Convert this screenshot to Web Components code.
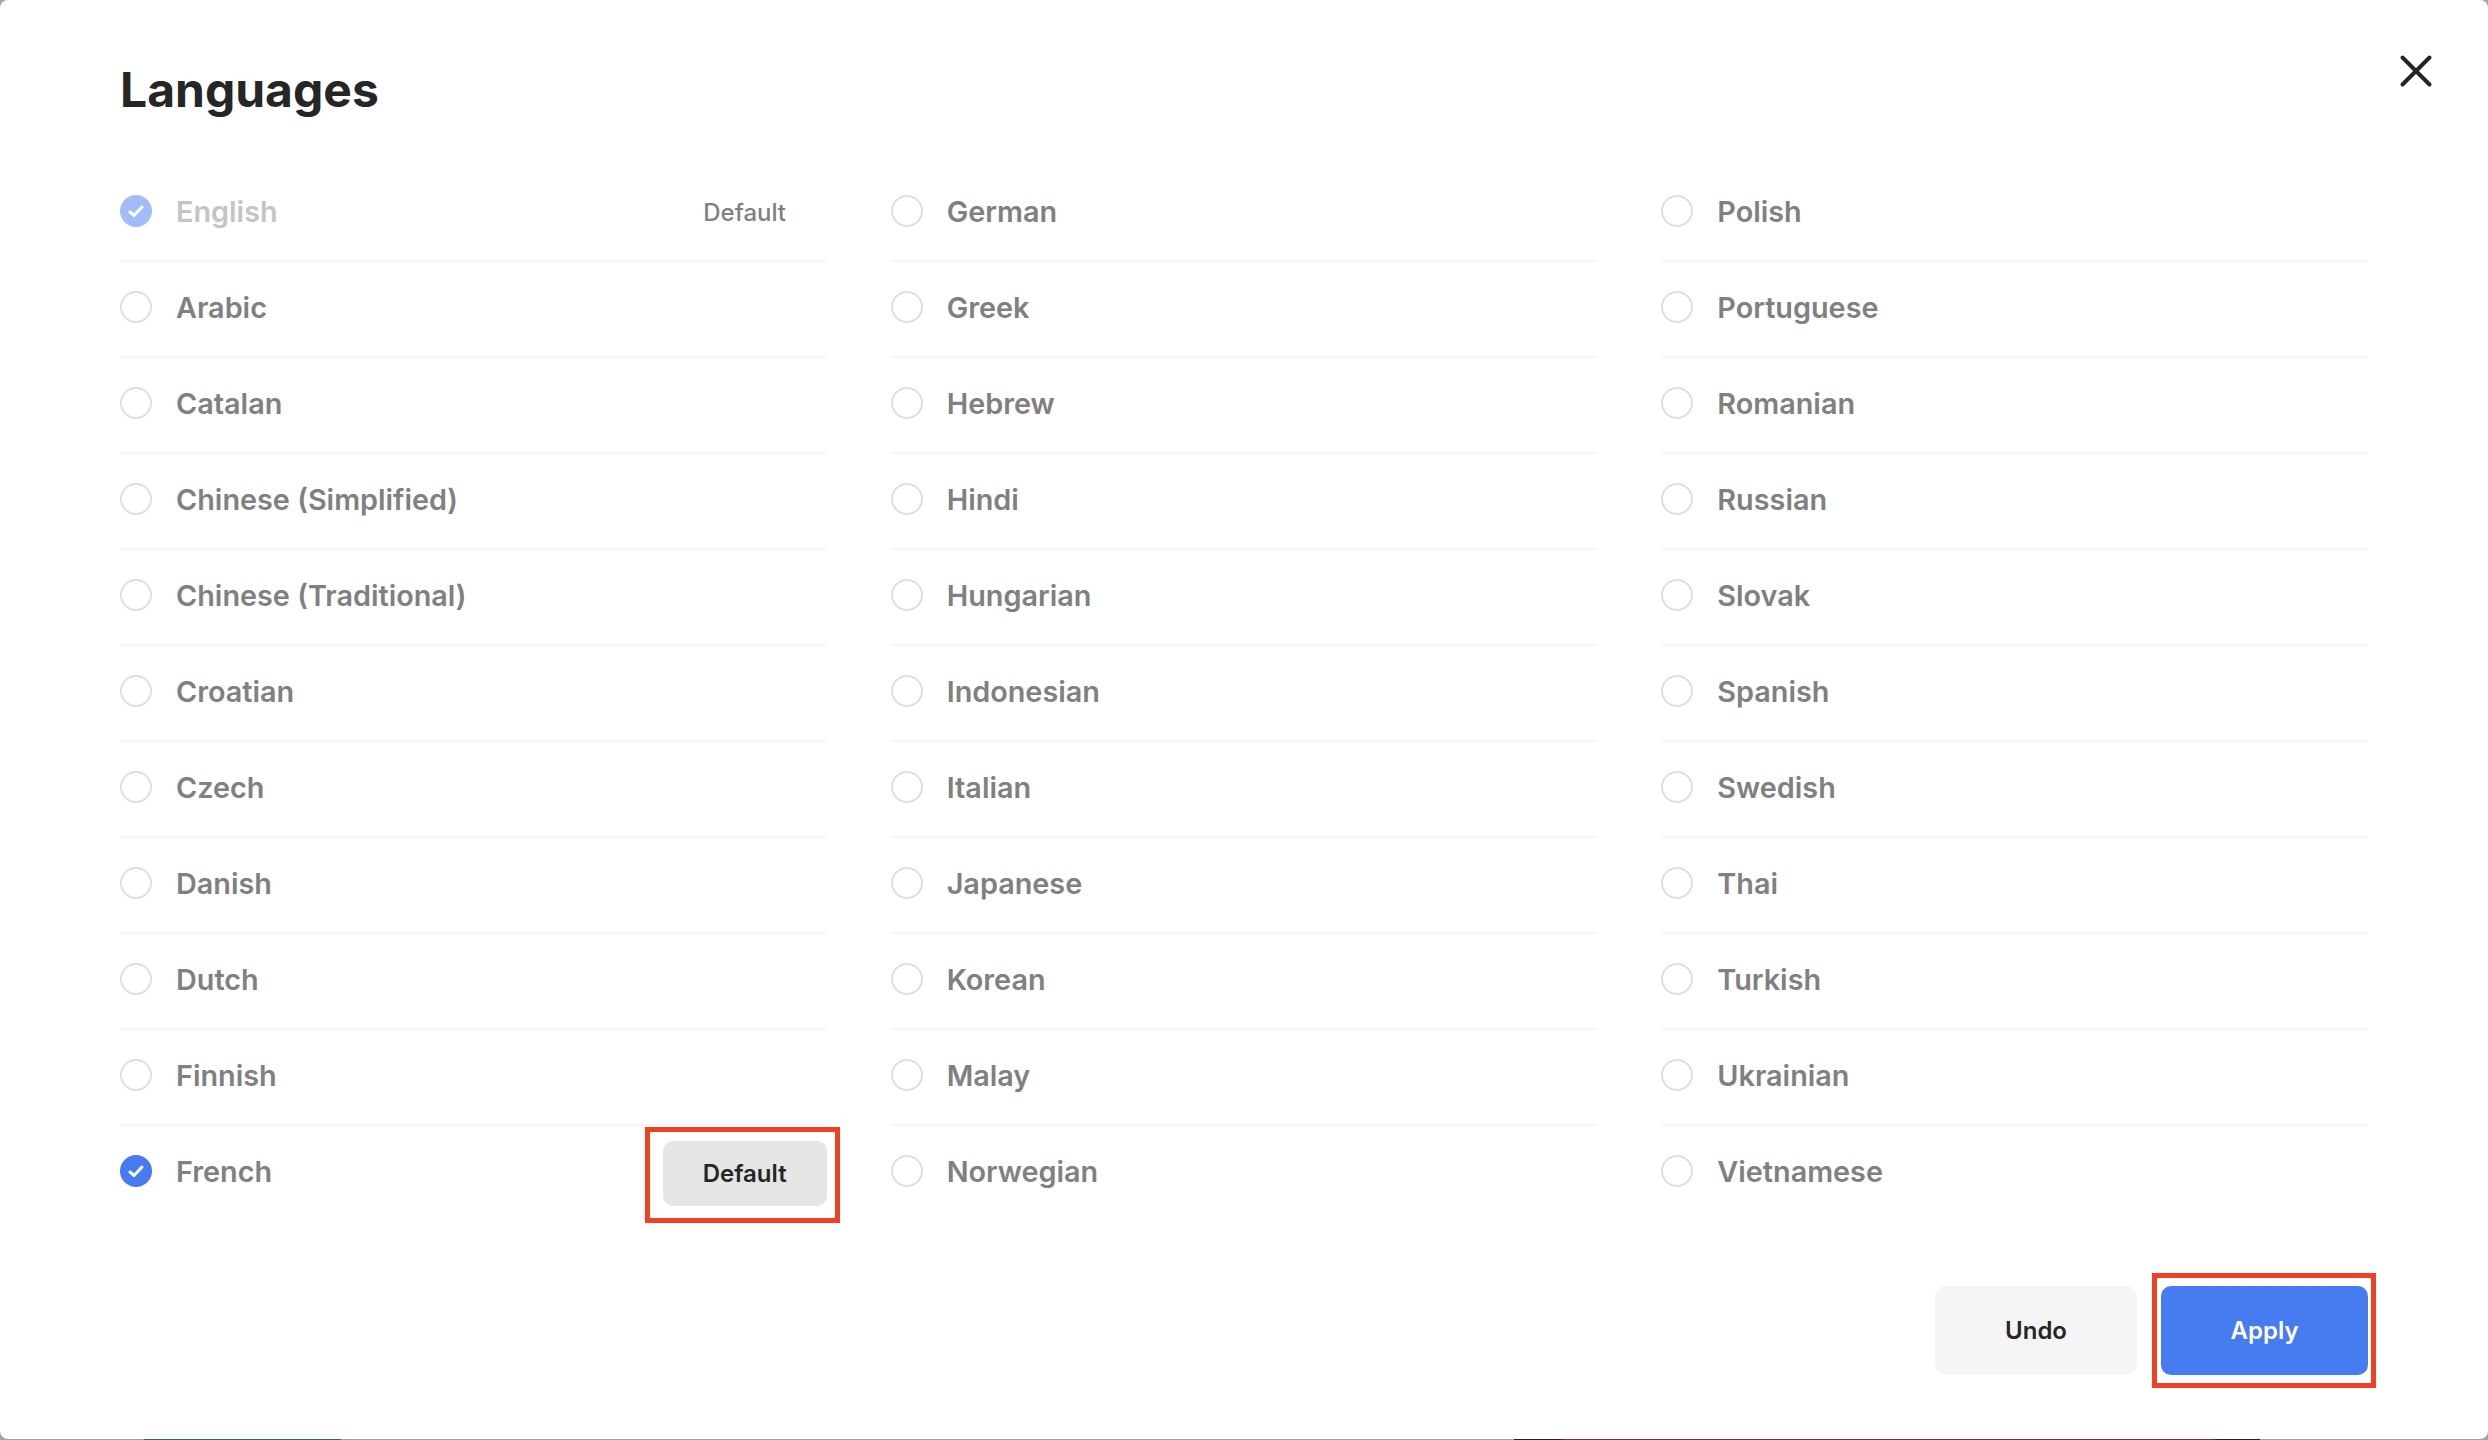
<!DOCTYPE html>
<html lang="en">
<head>
    <meta charset="UTF-8">
    <title>Languages</title>
    <style>
        html, body {
            margin: 0;
            height: 1440px;
            overflow: hidden;
        }
        body {
            font-family: Inter, "Liberation Sans", sans-serif;
            /* what shows of the page behind the modal, a 1px strip at the bottom */
            background: linear-gradient(to right,
                #a3a3a3 144px, #3f5a93 144px, #3f5a93 341px, #a3a3a3 341px,
                #a3a3a3 1514px, #26221f 1514px, #26221f 1561px,
                #7c2d28 1561px, #7c2d28 2215px,
                #26221f 2215px, #26221f 2260px, #a3a3a3 2260px) bottom / 100% 1px no-repeat, #a3a3a3;
        }
    </style>
</head>
<body>

    <lang-modal heading="Languages">
        <lang-row name="English" checked muted note></lang-row>
        <lang-row name="Arabic"></lang-row>
        <lang-row name="Catalan"></lang-row>
        <lang-row name="Chinese (Simplified)"></lang-row>
        <lang-row name="Chinese (Traditional)"></lang-row>
        <lang-row name="Croatian"></lang-row>
        <lang-row name="Czech"></lang-row>
        <lang-row name="Danish"></lang-row>
        <lang-row name="Dutch"></lang-row>
        <lang-row name="Finnish"></lang-row>
        <lang-row name="French" checked action last></lang-row>

        <lang-row name="German"></lang-row>
        <lang-row name="Greek"></lang-row>
        <lang-row name="Hebrew"></lang-row>
        <lang-row name="Hindi"></lang-row>
        <lang-row name="Hungarian"></lang-row>
        <lang-row name="Indonesian"></lang-row>
        <lang-row name="Italian"></lang-row>
        <lang-row name="Japanese"></lang-row>
        <lang-row name="Korean"></lang-row>
        <lang-row name="Malay"></lang-row>
        <lang-row name="Norwegian" last></lang-row>

        <lang-row name="Polish"></lang-row>
        <lang-row name="Portuguese"></lang-row>
        <lang-row name="Romanian"></lang-row>
        <lang-row name="Russian"></lang-row>
        <lang-row name="Slovak"></lang-row>
        <lang-row name="Spanish"></lang-row>
        <lang-row name="Swedish"></lang-row>
        <lang-row name="Thai"></lang-row>
        <lang-row name="Turkish"></lang-row>
        <lang-row name="Ukrainian"></lang-row>
        <lang-row name="Vietnamese" last></lang-row>

        <lang-button slot="footer" kind="undo">Undo</lang-button>
        <lang-button slot="footer" kind="apply" marked>Apply</lang-button>
    </lang-modal>

    <script>
        const modalTemplate = document.createElement('template');
        modalTemplate.innerHTML = `
        <style>
        :host {
            display: block;
            position: relative;
            box-sizing: border-box;
            height: 1439px;
            padding: 0 120px;
            background: #fff;
            border-radius: 8px;
        }
        h1 {
            margin: 0;
            padding-top: 61px;
            height: 166px;
            box-sizing: border-box;
            font-size: 48px;
            line-height: 58px;
            font-weight: 700;
            color: #262626;
        }
        .grid {
            display: grid;
            grid-template-columns: repeat(3, 1fr);
            grid-template-rows: repeat(11, 96px);
            grid-auto-flow: column;
            column-gap: 64px;
        }
        .footer {
            display: flex;
            justify-content: flex-end;
            gap: 24px;
            margin-top: 64px;
        }
        .close {
            position: absolute;
            top: 53px;
            right: 54px;
            width: 36px;
            height: 36px;
        }
        </style>
        <h1></h1>
        <svg class="close" viewBox="0 0 36 36" fill="none" stroke="#262626" stroke-width="4" stroke-linecap="round">
            <path d="M4.5 4.5 31.5 31.5M31.5 4.5 4.5 31.5"/>
        </svg>
        <div class="grid"><slot></slot></div>
        <div class="footer"><slot name="footer"></slot></div>`;

        class LangModal extends HTMLElement {
            connectedCallback() {
                this.attachShadow({mode: 'open'});
                this.shadowRoot.appendChild(modalTemplate.content.cloneNode(true));
                this.shadowRoot.querySelector('h1').textContent = this.getAttribute('heading');
            }
        }

        const rowTemplate = document.createElement('template');
        rowTemplate.innerHTML = `
        <style>
        :host {
            display: flex;
            align-items: flex-start;
            box-sizing: border-box;
            height: 96px;
            padding-top: 29px;
            border-bottom: 2px solid #f5f5f5;
            color: #808080;
        }
        :host([last]) {
            border-bottom: 0;
        }
        :host([muted]) {
            color: #c4c4c4;
        }
        .radio {
            box-sizing: border-box;
            flex: none;
            width: 32px;
            height: 32px;
            border: 2px solid #dedede;
            border-radius: 50%;
        }
        svg {
            display: block;
            width: 32px;
            height: 32px;
        }
        :host([checked]) .radio {
            border: 0;
            background: #477bf0;
        }
        :host([muted]) .radio {
            background: #a3bcf9;
        }
        .name {
            flex: 1;
            margin-left: 24px;
            font-size: 28.8px;
            line-height: 34px;
            font-weight: 600;
        }
        .note {
            width: 164px;
            padding-top: 1px;
            text-align: center;
            font-size: 24px;
            line-height: 34px;
            font-weight: 500;
            color: #808080;
        }
        lang-button {
            margin-top: -14px;
        }
        </style>
        <div class="radio"></div>
        <div class="name"></div>`;

        class LangRow extends HTMLElement {
            connectedCallback() {
                this.attachShadow({mode: 'open'});
                this.shadowRoot.appendChild(rowTemplate.content.cloneNode(true));
                this.shadowRoot.querySelector('.name').textContent = this.getAttribute('name');
                if (this.hasAttribute('checked')) {
                    this.shadowRoot.querySelector('.radio').innerHTML =
                        '<svg viewBox="0 0 32 32" fill="none" stroke="#fff" stroke-width="3" stroke-linecap="round" stroke-linejoin="round"><path d="M10 17 14 20.5 22 12"/></svg>';
                }
                if (this.hasAttribute('note')) {
                    const note = document.createElement('div');
                    note.className = 'note';
                    note.textContent = 'Default';
                    this.shadowRoot.appendChild(note);
                }
                if (this.hasAttribute('action')) {
                    const button = document.createElement('lang-button');
                    button.setAttribute('kind', 'default');
                    button.setAttribute('marked', '');
                    button.textContent = 'Default';
                    this.shadowRoot.appendChild(button);
                }
            }
        }

        const buttonTemplate = document.createElement('template');
        buttonTemplate.innerHTML = `
        <style>
        :host {
            display: flex;
            align-items: center;
            justify-content: center;
            position: relative;
            flex: none;
            box-sizing: border-box;
            border-radius: 10px;
            font-size: 24px;
            font-weight: 600;
            color: #262626;
        }
        :host([kind="default"]) {
            width: 164px;
            height: 65px;
            background: #e6e6e6;
            font-weight: 600;
        }
        :host([kind="undo"]) {
            width: 202px;
            height: 89px;
            background: #f5f5f5;
        }
        :host([kind="apply"]) {
            width: 207px;
            height: 89px;
            background: #477bf0;
            color: #fff;
        }
        /* red review marker drawn over the screenshot */
        .mark {
            display: none;
            position: absolute;
            border: 5px solid #ee4023;
        }
        :host([marked]) .mark {
            display: block;
        }
        :host([kind="default"]) .mark {
            inset: -14px -13px -17px -18px;
        }
        :host([kind="apply"]) .mark {
            inset: -13px -8px -13px -9px;
        }
        </style>
        <slot></slot>
        <span class="mark"></span>`;

        class LangButton extends HTMLElement {
            connectedCallback() {
                this.attachShadow({mode: 'open'});
                this.shadowRoot.appendChild(buttonTemplate.content.cloneNode(true));
            }
        }

        window.customElements.define('lang-button', LangButton);
        window.customElements.define('lang-row', LangRow);
        window.customElements.define('lang-modal', LangModal);
    </script>
</body>
</html>
